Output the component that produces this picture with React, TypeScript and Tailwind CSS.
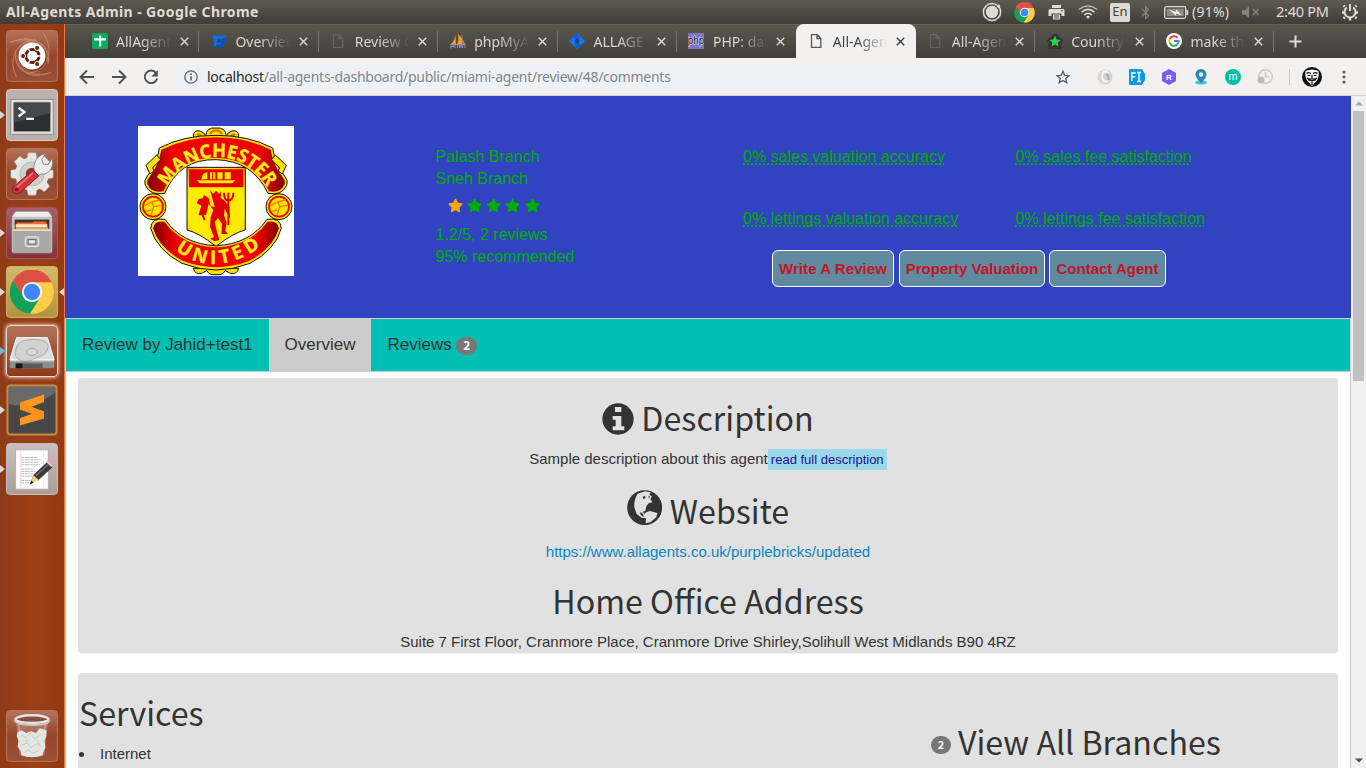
import React from "react";
import { FaStar, FaBluetoothB } from "react-icons/fa";

const UBUNTU = "font-['Noto_Sans',sans-serif]";
const HEAD = "font-['Noto_Sans_CJK_SC',sans-serif] text-[32.2px] leading-[40px] text-[#333] font-normal";

function ChromeMark({ className }: { className: string }) {
  return (
    <svg className={className} viewBox="0 0 48 48">
      <path d="M24 24 L4.1 11.5 A23 23 0 0 1 44.8 13.5 L24 13.5Z" fill="#dd5144" />
      <path d="M24 24 L33 29 L22 47 A23 23 0 0 1 4.1 11.5 L15 29Z" fill="#12a05c" />
      <path d="M24 13.5 H44.8 A23 23 0 0 1 22 47 L33.4 29.2Z" fill="#ffcd46" />
      <path d="M4.1 11.5 A23 23 0 0 1 44.8 13.5 H24 L14.5 29Z" fill="#dd5144" />
      <circle cx="24" cy="24" r="10.8" fill="#f4f4f4" />
      <circle cx="24" cy="24" r="8.7" fill="#4285f4" />
    </svg>
  );
}

function TopBar() {
  return (
    <header className={`flex h-6 shrink-0 items-center bg-linear-to-b from-[#5d5a50] to-[#3f3d38] pl-[6px] text-[#e0dcd3] ${UBUNTU}`}>
      <div className="grow pb-[2px] text-[14px] font-bold tracking-[0.4px]">All-Agents Admin - Google Chrome</div>
      <svg className="h-5 w-5" viewBox="0 0 20 20">
        <circle cx="10" cy="10" r="8.6" fill="none" stroke="#e0dcd3" strokeWidth="1.5" />
        <circle cx="10" cy="10" r="6.2" fill="#e0dcd3" />
        <circle cx="16.6" cy="4.2" r="1.6" fill="#e0dcd3" />
      </svg>
      <ChromeMark className="ml-[12px] h-[21px] w-[21px]" />
      <svg className="ml-[13px] h-[17px] w-[17px]" viewBox="0 0 17 17">
        <path d="M4 1h9v3H4zM1.5 5h14l1 1v6h-3V9.500h-10V12h-3V6z" fill="#e0dcd3" />
        <path d="M5 10.500h7v5H5z" fill="#e0dcd3" />
        <path d="M6 12h5M6 14h5M13 6.800h2" stroke="#4b4942" />
      </svg>
      <svg className="ml-[13px] h-4 w-5" viewBox="0 0 20 16" fill="none" stroke="#e0dcd3" strokeWidth="1.500">
        <path d="M.8 5.500Q10-1.500 19.200 5.500" opacity=".75" />
        <path d="M3.500 8.300Q10 2.500 16.500 8.300" />
        <path d="M6.200 11Q10 7.500 13.800 11" />
        <path d="M8 12.500Q10 11 12 12.500L10 15z" fill="#e0dcd3" stroke="none" />
      </svg>
      <div className="ml-3 flex h-[19px] w-[20px] items-center justify-center rounded-[2px] bg-[#dfdbd2] text-[13px] text-[#46443e]">En</div>
      <FaBluetoothB className="ml-[9px] h-[15px] w-[13px] text-[#85827a]" />
      <svg className="ml-[12px] h-[13px] w-[25px]" viewBox="0 0 25 13">
        <rect x=".7" y=".7" width="21" height="11.600" rx="1.500" fill="none" stroke="#e0dcd3" strokeWidth="1.300" />
        <rect x="2.700" y="2.700" width="17" height="7.600" fill="#8d8a81" />
        <path d="M5 3.500l7 2.500V3.200L18 9.500 12 7.500v2.300z" fill="#f3efe6" />
        <path d="M22.500 4h1.700v5h-1.700z" fill="#e0dcd3" />
      </svg>
      <div className="ml-[3px] w-[38px] pb-[1px] text-[14px] tracking-[0.25px]">(91%)</div>
      <svg className="ml-[11px] h-[14px] w-[19px]" viewBox="0 0 19 14">
        <path d="M1 5h3l4-4v12L4 9.500H1z" fill="#85827a" />
        <path d="M12 4l5.500 6M17.500 4L12 10" stroke="#85827a" strokeWidth="1.500" />
      </svg>
      <div className="ml-[16px] w-[54px] pb-[1px] whitespace-nowrap text-[14.500px] tracking-[-0.25px]">2:40 PM</div>
      <svg className="mr-[7px] ml-[11px] h-[18px] w-[18px]" viewBox="0 0 18 18" fill="none" stroke="#e0dcd3">
        <path d="M5.800 4.500a5.500 5.500 0 1 0 6.400 0" strokeWidth="2" />
        <path d="M9 1v7" strokeWidth="2" />
        <path d="M3.700 3.700L2.500 2.500M14.300 3.700l1.200-1.200M1 9.500h2M15 9.500h2M3.800 14.200l-1.300 1.300M14.200 14.200l1.300 1.300M9 15v2.500" strokeWidth="2.400" />
      </svg>
    </header>
  );
}

function LaunchUbuntu() {
  return (
    <svg viewBox="0 0 52 52">
      <g fill="none" stroke="#e6b9a6" opacity=".4" strokeWidth="1.200">
        <path d="M3 12C26 2 46 14 43 34" />
        <path d="M38 2C50 22 42 42 22 44" />
        <path d="M46 43C24 52 6 40 9 20" />
        <path d="M10 48C1 30 8 12 30 8" />
      </g>
      <path d="M3 12C26 2 46 14 43 34L36 20Q24 8 3 12zM46 43C24 52 6 40 9 20l5 14q12 14 32 9z" fill="#e6b9a6" opacity=".2" />
      <circle cx="27" cy="27.500" r="14.500" fill="#5a1d0b" opacity=".3" />
      <circle cx="26" cy="26" r="14" fill="#fff" />
      <circle cx="26.500" cy="26" r="6.800" fill="none" stroke="#5e2313" strokeWidth="3.200" />
      <g stroke="#fff" strokeWidth="1.500"><path d="M26.500 26h-9M26.500 26l4.800-8.300M26.500 26l4.800 8.300" transform="rotate(60 26.500 26)" /></g>
      <circle cx="26.500" cy="26" r="5.300" fill="#fff" />
      <g fill="#5e2313" stroke="#fff"><circle cx="16.800" cy="26" r="2.600" /><circle cx="31.300" cy="17.600" r="2.600" /><circle cx="31.300" cy="34.400" r="2.600" /></g>
    </svg>
  );
}

function LaunchTerminal() {
  return (
    <svg viewBox="0 0 52 52">
      <rect x="4" y="10" width="44" height="36" fill="#ececec" stroke="#888" />
      <rect x="6" y="12" width="40" height="32" fill="#c9c9c9" />
      <rect x="7" y="13" width="38" height="30" fill="#2d2f30" />
      <path d="M7 13h38v11L7 34z" fill="#515354" opacity=".7" />
      <path d="M12 18.500l6 4.500-6 4.500" fill="none" stroke="#eee" strokeWidth="2.600" />
      <path d="M20 30h8" stroke="#eee" strokeWidth="2.400" />
    </svg>
  );
}

function LaunchSettings() {
  return (
    <svg viewBox="0 0 52 52">
      <g transform="translate(26 26)">
        <g fill="#e9e9e7" stroke="#a7a7a3" strokeWidth=".6">
          {[0, 45, 90, 135].map((a) => (
            <path key={a} transform={`rotate(${a})`} d="M-5-17l1-5h8l1 5v34l-1 5h-8l-1-5z" />
          ))}
        </g>
        <circle r="17.500" fill="#e4e4e2" />
        <circle r="12.500" fill="#cfcfcc" stroke="#b5b5b1" />
        <circle r="6.500" fill="#87401f" />
      </g>
      <path d="M31 26q-5-5-2-12 3-8 11-9l-4 6 2 5 5 0 4-6q2 9-4 14-4 3-8 2l-3 3z" fill="#ececec" stroke="#777" strokeWidth=".8" />
      <path d="M27 22l6 6L14 45c-5 4-11-1-7-6z" fill="#d6333a" stroke="#8c1c22" />
      <path d="M27 25L10 40" stroke="#f08080" strokeWidth="1.500" />
      <circle cx="10" cy="42" r="2" fill="#8c1c22" />
    </svg>
  );
}

function LaunchFiles() {
  return (
    <svg viewBox="0 0 52 52">
      <path d="M9 4h34l4 7v35H5V11z" fill="#c4c4c4" />
      <path d="M9 4h34l4 5H5z" fill="#efefef" />
      <rect x="8" y="12" width="36" height="15" fill="#3b3634" />
      <path d="M10 15h16l2-1h13v12H10z" fill="#f26d2c" />
      <path d="M9 17h33v3H9z" fill="#fce7cf" />
      <path d="M9 20h34v5H9z" fill="#f0a34c" />
      <path d="M6 22h40v25H6z" fill="#a9a9a9" />
      <path d="M6 22h40v2H6z" fill="#dcdcdc" />
      <rect x="19" y="30" width="14" height="10" rx="2" fill="#bdbdbd" stroke="#eee" />
      <rect x="22" y="33" width="8" height="4.500" fill="#eee" stroke="#555" />
    </svg>
  );
}

function LaunchDisk() {
  return (
    <svg viewBox="0 0 52 52">
      <path d="M10 12h32l7 22v8H3v-8z" fill="#cfcfcf" />
      <path d="M10 12h32l7 23H3z" fill="#dededc" stroke="#f4f4f4" />
      <path d="M9 32C8 18 14 14 27 14s18 4 15 11-12 7-16 10-14 2-17-3z" fill="#d2d2d0" stroke="#aaa" />
      <ellipse cx="26" cy="27" rx="5.500" ry="3.500" fill="#ddd" stroke="#999" />
      <path d="M3 37h46v7H3z" fill="#8c8c8a" />
      <path d="M9 39h28v5H9z" fill="#5a5a5a" />
      <path d="M9 39h7v5H9z" fill="#171717" />
    </svg>
  );
}

function LaunchSublime() {
  return (
    <svg viewBox="0 0 52 52">
      <rect x="1.500" y="1.500" width="49" height="49" rx="3" fill="#474747" stroke="#c9873f" strokeWidth="2" />
      <path d="M2.500 2.500h47v6Q26 26 2.500 20z" fill="#8b8b8b" opacity=".5" />
      <path d="M14 18.500L38 10.500V18l-13 5 13 4.500V34.500L14 41.500V34l13-4.500-13-4.500z" fill="#ff9820" />
      <path d="M14 18.500L38 27.500V34.500L14 25.500z" fill="#f99018" />
    </svg>
  );
}

function LaunchEditor() {
  return (
    <svg viewBox="0 0 52 52">
      <path d="M9 6h34v41H9z" fill="#fff" stroke="#b4aba9" />
      <path d="M14.500 6v41" stroke="#f2b9b9" strokeWidth=".7" />
      <path d="M38 6v41" stroke="#f2d5d5" strokeWidth=".6" />
      <g stroke="#b3b3b3" strokeWidth=".9" strokeDasharray="3 .6 5 .6">
        <path d="M15 14h17M15 16.500h20M15 19h18M15 21.500h19M15 26h13M15 28.500h15M15 31h12M15 33.500h11M15 38h10M15 40.500h8" />
      </g>
      <path d="M25 40l3-8 14-13 5 5-14 13z" fill="#3b3b3b" stroke="#1c1c1c" strokeWidth=".6" />
      <path d="M30 33L43 21" stroke="#777" strokeWidth="1.200" />
      <path d="M23.500 42l4-9.500 5.500 5z" fill="#f0d57a" />
      <path d="M23.500 42l2-4 2.300 2.200z" fill="#222" />
      <path d="M41 19l2-2 5 5-2 2z" fill="#cfcfd4" />
      <path d="M43 17c2-2 6 1 5 4l-1 1-4.500-4.500z" fill="#e99ac1" />
    </svg>
  );
}

function LaunchTrash() {
  return (
    <svg viewBox="0 0 52 52">
      <path d="M9 10l4 36q13 4 26 0l4-36z" fill="#d9c2b8" opacity=".28" />
      <path d="M11 22l4-2 5 3 5-2 5 2 4-5 7 2 0 6-2 5 1 7-2 4-1 4q-11 4-22 0l-1-5-3-4 1-6-2-5z" fill="#e3e6e3" />
      <path d="M15 25l5 3 4-5 5 6 6-5M15 36l6-3 4 5 6-4 5 3M18 44l4-4 5 4 6-3M21 29l-1 4M31 30l3 5" fill="none" stroke="#c0c5c1" strokeWidth=".9" />
      <path d="M12 12l3.500 34M40 12l-3.500 34" stroke="#efe6e1" opacity=".6" />
      <ellipse cx="26" cy="8.500" rx="17" ry="4" fill="#87523b" stroke="#e4e4e2" strokeWidth="2.600" />
      <path d="M8 9q0 5 18 5.500T44 9" fill="none" stroke="#c9c9c6" strokeWidth="2" />
    </svg>
  );
}

type Launch = { icon: React.ReactNode; tile: string; left?: string; right?: boolean };

const plain = "bg-linear-to-b from-[#b2735a] via-[#96452a] to-[#9a5136] border border-[#b77459]";
const launches: Launch[] = [
  { icon: <LaunchUbuntu />, tile: plain },
  { icon: <LaunchTerminal />, tile: "bg-linear-to-b from-[#bdb2ad] to-[#b9b0ac] border border-[#d5cdc9]", left: "#ddd6d2" },
  { icon: <LaunchSettings />, tile: plain },
  { icon: <LaunchFiles />, tile: "bg-linear-to-b from-[#a5616b] to-[#84303a] border border-[#a2535c]", left: "#ddd6d2" },
  { icon: <ChromeMark className="h-full w-full p-[2.500px]" />, tile: "bg-linear-to-b from-[#d3b968] to-[#b29340] border border-[#cbb069]", left: "#ddd6d2", right: true },
  { icon: <LaunchDisk />, tile: "bg-linear-to-b from-[#b2735a] to-[#8d3718] border border-[#e8dcd6] shadow-[0_0_4px_#fff]", left: "#69b7e4" },
  { icon: <LaunchSublime />, tile: "bg-[#7a5125]", left: "#ddd6d2" },
  { icon: <LaunchEditor />, tile: "bg-linear-to-b from-[#c9bfbc] to-[#aa9e9b] border border-[#c8bfbc]", left: "#ddd6d2" },
];

function LaunchRow({ item }: { item: Launch }) {
  return (
    <div className="flex h-[52px] items-center">
      <svg className="h-2 w-[6px] shrink-0" viewBox="0 0 6 8">
        {item.left && <path d="M0 0L5 4 0 8z" fill={item.left} />}
      </svg>
      <div className={`h-[52px] w-[52px] shrink-0 overflow-hidden rounded-[4px] [&>svg]:h-full [&>svg]:w-full ${item.tile}`}>{item.icon}</div>
      <svg className="h-2 w-[6px] shrink-0" viewBox="0 0 6 8">
        {item.right && <path d="M6 0L1 4 6 8z" fill="#ddd6d2" />}
      </svg>
    </div>
  );
}

function Launcher() {
  return (
    <aside className="flex w-[65px] shrink-0 flex-col border-r border-[#f2763f] bg-[#983c15] bg-linear-to-r from-[#8f3b18] via-[#9b3f15] to-[#933a14] pt-[6px] pb-[6px]">
      <div className="flex grow flex-col gap-[7px]">
        {launches.map((l, i) => (
          <LaunchRow key={i} item={l} />
        ))}
      </div>
      <LaunchRow item={{ icon: <LaunchTrash />, tile: plain }} />
    </aside>
  );
}

const page = (stroke: string) => (
  <svg viewBox="0 0 16 16" fill="none" stroke={stroke} strokeWidth="1.300">
    <path d="M3.500 1.700h5.800l3.500 3.500v9.100H3.500zM9 1.700v3.800h3.800" />
  </svg>
);

const tabs = [
  { title: "AllAgents", icon: <svg viewBox="0 0 16 16"><rect width="16" height="16" rx="1.500" fill="#0fa861" /><path d="M2 5.200h12v2.200H2zM7 2.500h2.200v11H7z" fill="#fff" /></svg> },
  { title: "Overview", icon: <svg viewBox="0 0 16 16"><path d="M1.500 2.500h13l-2 11.500H3.700z" fill="#0f6cf5" /><path d="M14.300 4L12.500 14H4l2-3h4l.7-4.500z" fill="#0052cc" /><path d="M5.800 6.200h4.400l-.7 3.600h-3z" fill="#43433e" /></svg> },
  { title: "Review C", icon: page("#65635d") },
  { title: "phpMyAd", icon: <svg viewBox="0 0 16 16"><path d="M5.500 2Q5 7 1 11h5zM8 1q1 6-1 10h8Q12 4 8 1z" fill="#f89c1c" /><path d="M12 2l1 9" stroke="#6c78af" /><path d="M.5 11.500h15M1 13.500h2.500v-2H1v4M5 11v4M7.500 11v4M9.500 15v-3h3v3M11 12v3M15 12v3" fill="none" stroke="#9290b8" /></svg> },
  { title: "ALLAGE", icon: <svg viewBox="0 0 16 16"><path d="M8 0l8 8-8 8-8-8z" fill="#1476fb" /><path d="M8 0l3 5-3 3-4-4zM8 16l-3-5 3-3 4 4z" fill="#0860dc" /><path d="M8 5.300L10.700 8 8 10.700 5.300 8z" fill="#34404c" /></svg> },
  { title: "PHP: date", icon: <svg viewBox="0 0 16 16"><rect width="16" height="16" fill="#8273bd" /><text x="8" y="11" textAnchor="middle" fontFamily="Liberation Sans" fontSize="10" fill="#111" stroke="#e8e4ff" strokeWidth="1" paintOrder="stroke">php</text></svg> },
  { title: "All-Agents", active: true, icon: page("#55585d") },
  { title: "All-Agents", icon: page("#65635d") },
  { title: "Country", icon: <svg viewBox="0 0 16 16"><path d="M0 7l8-7 8 7v1.500h-1.500V16h-13V8.500H0z" fill="#343331" /><path d="M8 2.700l1.700 3.800 4 .4-3 2.700.9 4L8 11.500l-3.600 2.100.9-4-3-2.700 4-.4z" fill="#2bd14b" /></svg> },
  { title: "make this", icon: <svg viewBox="0 0 16 16"><circle cx="8" cy="8" r="8" fill="#fff" /><g fill="none" strokeWidth="2"><path d="M11.500 4.700A4.700 4.700 0 0 0 3.800 6" stroke="#ea4335" /><path d="M3.800 6a4.700 4.700 0 0 0 0 4.100" stroke="#fbbc05" /><path d="M3.800 10.100a4.700 4.700 0 0 0 7.400 1.400" stroke="#34a853" /><path d="M11.200 11.500A4.700 4.700 0 0 0 12.700 8H8" stroke="#4285f4" /></g></svg> },
];

function TabStrip() {
  return (
    <div className={`flex h-[34px] shrink-0 border-t border-[#68654f] bg-linear-to-b from-[#59574e] to-[#403f39] pl-[15px] text-[14px] text-[#d9d6ce] ${UBUNTU}`}>
      {tabs.map((t, i) => (
        <div
          key={i}
          className={
            t.active
              ? "-mt-px flex w-[119.400px] shrink-0 items-center rounded-t-[8px] bg-[#f2f1f0] pl-[12px] text-[#3f4245]"
              : "flex w-[119.400px] shrink-0 items-center pb-px pl-[11.500px]"
          }
        >
          <div className="h-4 w-4 shrink-0 [&>svg]:h-4 [&>svg]:w-4">{t.icon}</div>
          <div className="ml-[8px] w-[56px] shrink-0 overflow-hidden pl-[0.500px] whitespace-nowrap mask-r-from-45%">{t.title}</div>
          <svg className="ml-[8px] h-[9px] w-[9px] shrink-0" viewBox="0 0 9 9" stroke="currentColor" strokeWidth="1.500">
            <path d="M.8.8l7.400 7.400M8.200.8L.8 8.200" />
          </svg>
          {!t.active && i !== 5 && <div className="ml-auto h-[21px] w-px bg-[#77756c]" />}
        </div>
      ))}
      <svg className="mt-[10px] ml-[15px] h-[13px] w-[13px]" viewBox="0 0 13 13" stroke="#e2dfd8" strokeWidth="2">
        <path d="M6.500.5v12M.5 6.500h12" />
      </svg>
    </div>
  );
}

function Toolbar() {
  return (
    <div className={`flex h-[38px] shrink-0 items-center border-b border-[#d3d3d3] bg-[#f2f1f0] ${UBUNTU}`}>
      <svg className="ml-[14px] h-4 w-4" viewBox="0 0 16 16" fill="none" stroke="#4d5053" strokeWidth="1.900"><path d="M15 8H2M8 1.500L1.500 8 8 14.500" /></svg>
      <svg className="ml-4 h-4 w-4" viewBox="0 0 16 16" fill="none" stroke="#4d5053" strokeWidth="1.900"><path d="M1 8h13M8 1.500L14.500 8 8 14.500" /></svg>
      <svg className="ml-4 h-4 w-4" viewBox="0 0 16 16" fill="none" stroke="#4d5053" strokeWidth="1.900"><path d="M13 3.800A6.300 6.300 0 1 0 14.200 9.500" /><path d="M14.800 1v6.500H8.300z" fill="#4d5053" stroke="none" /></svg>
      <div className="ml-[14px] flex h-7 w-[910px] items-center rounded-full bg-[#eef2f4] pl-[11px]">
        <svg className="h-[14px] w-[14px]" viewBox="0 0 14 14" fill="none" stroke="#5f6368"><circle cx="7" cy="7" r="6.200" strokeWidth="1.300" /><path d="M7 6.200v4.300M7 3.300v1.600" strokeWidth="1.600" /></svg>
        <div className="ml-[9px] text-[14px] tracking-[-0.27px] text-[#80868b]"><span className="text-[#26282b]">localhost</span>/all-agents-dashboard/public/miami-agent/review/48/comments</div>
        <svg className="mr-[13px] ml-auto h-[14px] w-[14px]" viewBox="0 0 14 14" fill="none" stroke="#54585c" strokeWidth="1.300"><path d="M7 1.300l1.700 4 4.300.4-3.300 2.800 1 4.200L7 10.500l-3.700 2.200 1-4.200L1 5.700l4.300-.4z" /></svg>
      </div>
      <div className="ml-[14px] flex items-center gap-4 [&>svg]:h-4 [&>svg]:w-4">
        <svg viewBox="0 0 16 16"><circle cx="8" cy="8" r="7.500" fill="#d5d5d5" /><path d="M6 2q-4 5 0 11 4 2 7-2-5 2-7-2-1-4 2-5t4 3q1-5-3-6z" fill="#f6f6f6" /><path d="M9 5q4 2 2 6" stroke="#aaa" strokeWidth="2" fill="none" /></svg>
        <svg viewBox="0 0 16 16"><path d="M1 0h12l3 5v6l-3 5H1q-1 0-1-1V1q0-1 1-1z" fill="#0b9bea" /><path d="M2.800 12V4h4M2.800 7.800h3.500M8 3.500h4M10 3.500v9M8 12.500h4" stroke="#fff" strokeWidth="1.400" fill="none" /></svg>
        <svg viewBox="0 0 16 16"><path d="M8 0l7 4v8l-7 4-7-4V4z" fill="#7a5cf0" /><text x="8" y="11" textAnchor="middle" fontFamily="Liberation Sans" fontSize="8" fontWeight="bold" fill="#fff">R</text></svg>
        <svg viewBox="0 0 16 16"><ellipse cx="8" cy="13.500" rx="6" ry="2" fill="#40c5cf" /><path d="M8 14Q2.500 9 2.500 5.500a5.500 5.500 0 0 1 11 0Q13.500 9 8 14z" fill="#2787b8" /><circle cx="8" cy="5.500" r="2.300" fill="#f2f1f0" /></svg>
        <svg viewBox="0 0 16 16"><circle cx="8" cy="8" r="8" fill="#00bfa5" /><text x="8" y="11.200" textAnchor="middle" fontFamily="Lato" fontSize="11" fill="#fff">m</text></svg>
        <svg viewBox="0 0 16 16"><circle cx="8.500" cy="7.500" r="6.800" fill="none" stroke="#c9c9c9" strokeWidth="1.400" /><path d="M8.500 3v5h4" fill="none" stroke="#c9c9c9" strokeWidth="1.400" /><circle cx="4" cy="11" r="3.500" fill="#bcbcbc" /></svg>
      </div>
      <div className="ml-4 h-4 w-px bg-[#c9c9c9]" />
      <svg className="ml-3 h-5 w-5" viewBox="0 0 20 20">
        <circle cx="10" cy="10" r="10" fill="#101010" />
        <path d="M3.500 4Q10 1 16.500 4q1 6-2 10L10 19l-4.500-5q-3-4-2-10z" fill="#f5f5f5" />
        <path d="M4.500 6.500Q7 4.500 9 7M11 7q2-2.500 4.500-.5M5.500 8.500h3M11.500 8.500h3M10 8v3M5 11q3 2 5 .5 2 1.500 5-.5M6 12.500q4 2.500 8 0M10 14.500v3.500" stroke="#111" fill="none" strokeWidth="1.100" />
      </svg>
      <svg className="ml-[20px] h-4 w-1" viewBox="0 0 4 16" fill="#5b5e61"><circle cx="2" cy="3" r="1.600" /><circle cx="2" cy="8" r="1.600" /><circle cx="2" cy="13" r="1.600" /></svg>
    </div>
  );
}

function Crest() {
  return (
    <svg className="mt-[30px] h-[150px] w-[156px] shrink-0 bg-white" viewBox="24 18 468 450">
      <defs>
        <path id="top-arc" d="M112 200A170 170 0 0 1 412 202" />
        <path id="bottom-arc" d="M136 390Q250 478 390 382" />
        <linearGradient id="band">
          <stop offset="0" stopColor="#7d0000" /><stop offset=".18" stopColor="#f00000" /><stop offset=".82" stopColor="#f00000" /><stop offset="1" stopColor="#7d0000" />
        </linearGradient>
        <radialGradient id="shield" r=".75"><stop offset=".65" stopColor="#ffea00" /><stop offset="1" stopColor="#f47b00" /></radialGradient>
      </defs>
      <g fill="#ffe100" stroke="#111" strokeWidth="3">
        <path d="M190 50q0-22 20-17 15 5 17 15 2-27 31-24 29-3 31 24 2-10 17-15 20-5 20 17l-20 14H210z" />
        <path d="M190 445q5 20 25 15l15-8q8 14 28 12 20 2 28-12l15 8q20 5 25-15z" />
      </g>
      <path d="M200 45q10-5 18 8M298 53q8-13 18-8M240 42q18-22 36 0" fill="none" stroke="#d66c00" strokeWidth="6" />
      <path d="M88 84Q160 46 258 46t170 38q6 46 36 84 12 14 6 28-14 32-56 24Q368 122 258 119T104 220Q60 228 46 196q-6-14 6-28 30-38 36-84z" fill="#ffe100" stroke="#111" strokeWidth="3" />
      <path d="M94 89Q170 52 258 52t164 37q8 46 36 83 10 12 5 22-12 26-46 20Q370 116 258 113T100 214Q64 220 53 194q-5-10 5-22 28-37 36-83z" fill="url(#band)" />
      <g fill="#ffe100" stroke="#111" strokeWidth="3">
        <path d="M80 105L48 136l12 26 12-9-4-10 24-24zM436 105l33 31-12 26-12-9 4-10-25-24z" />
      </g>
      <path d="M62 325q2-34 43-27 52 75 153 79 101-4 153-79 41-7 43 27-18 65-94 105-102 40-204 0Q80 390 62 325z" fill="#ffe100" stroke="#111" strokeWidth="3" />
      <path d="M69 325q4-25 34-20 55 74 155 77 100-3 155-77 30-5 34 20-18 60-90 98-99 37-198 0Q87 385 69 325z" fill="url(#band)" />
      <path d="M171 142h175v188q-35 8-88 49-52-41-87-49z" fill="url(#shield)" stroke="#111" strokeWidth="3" />
      <path d="M177 148h163v54H177z" fill="#e50000" />
      <path d="M200 181h116l-10 9h-96zM214 179q2-22 18-22v20zM240 157h16v21h-16zM262 157h16v21h-16zM284 157h18v21h-18z" fill="#ffea00" />
      <path d="M248 157v24M280 157v24" stroke="#e50000" strokeWidth="3" />
      <path d="M178 205h161" stroke="#ffea00" strokeWidth="3" />
      <path d="M240 210l10 12 8-10 10 10 6-8-2 20 12 8 14 18 2 36-10-18-6-12-2 20 8 22-4 24 8 10h-20l2-30-12-18-10 12 6 26 8 28-14 4-14-8 12-5-12-30 2-30 8-20-14-20-8 34-22-2 8-26-14-8 6-12 12-2 4-10 14 10 6 24 12 2z" fill="#df0000" />
      <path d="M295 218v98M282 218q0 22 13 24 15-2 15-24M216 280l8 20M218 270l-10 16" fill="none" stroke="#df0000" strokeWidth="6" />
      {[69, 447].map((x) => (
        <g key={x} fill="none">
          <circle cx={x} cy="260" r="39" fill="#ffe100" stroke="#111" strokeWidth="3" />
          <circle cx={x} cy="260" r="30" stroke="#f00000" strokeWidth="5" />
          <path d={`M${x - 26} 258l22-12 24-6M${x - 4} 246l6 14-8 26M${x + 2} 260l24-4M${x - 20} 274l14-4`} stroke="#f47b00" strokeWidth="4" />
        </g>
      ))}
      <g fontFamily="Open Sans" fontWeight="bold" fill="#ffec1f" stroke="#ffec1f" strokeWidth="1">
        <text fontSize="56"><textPath href="#top-arc" textLength="366" lengthAdjust="spacingAndGlyphs">MANCHESTER</textPath></text>
        <text fontSize="56"><textPath href="#bottom-arc" textLength="276" lengthAdjust="spacing">UNITED</textPath></text>
      </g>
    </svg>
  );
}

const heroBtn = "h-[37px] rounded-[6px] border border-white bg-[#5f8a9f] text-[15px] font-bold text-[#c41425]";

function Stat({ children }: { children: string }) {
  return (
    <div>
      <abbr className="underline decoration-dotted decoration-2 underline-offset-1 [text-decoration-skip-ink:none]">{children}</abbr>
    </div>
  );
}

function Hero() {
  return (
    <section className="flex h-[222px] shrink-0 bg-[#3143c0] pl-[73px] text-[16px] leading-[22px] text-[#00b000]">
      <Crest />
      <div className="ml-[141.500px] w-[307.500px] shrink-0 pt-[50px]">
        <div>Palash Branch</div>
        <div>Sneh Branch</div>
        <div className="flex h-[34px] items-center gap-[4.300px] pb-[3px] pl-[12px]">
          {[0, 1, 2, 3, 4].map((n) => (
            <FaStar key={n} className={n === 0 ? "h-[15px] w-[15px] text-[#ffa500]" : "h-[15px] w-[15px] text-[#00b000]"} />
          ))}
        </div>
        <div>1.2/5, 2 reviews</div>
        <div>95% recommended</div>
      </div>
      <div className="pt-[50px]">
        <div className="grid grid-cols-[272.500px_200px] gap-y-[40px] whitespace-nowrap">
          <Stat>0% sales valuation accuracy</Stat>
          <Stat>0% sales fee satisfaction</Stat>
          <Stat>0% lettings valuation accuracy</Stat>
          <Stat>0% lettings fee satisfaction</Stat>
        </div>
        <div className="mt-[20px] flex pl-[29px]">
          <button className={`w-[122px] tracking-[0.08px] ${heroBtn}`}>Write A Review</button>
          <button className={`ml-[5px] w-[146px] ${heroBtn}`}>Property Valuation</button>
          <button className={`ml-1 w-[117px] ${heroBtn}`}>Contact Agent</button>
        </div>
      </div>
    </section>
  );
}

function Badge({ className }: { className: string }) {
  return (
    <span className={`flex h-[18px] items-center justify-center rounded-[10px] bg-[#777] pb-[2px] font-['Noto_Sans_CJK_SC',sans-serif] leading-[16px] font-bold text-white ${className}`}>2</span>
  );
}

function NavBar() {
  return (
    <nav className="flex h-[54px] shrink-0 border-y border-[#ccc] bg-[#00bfb3] text-[17px] text-[#333]">
      <div className="flex w-[203px] items-center pl-4">Review by Jahid+test1</div>
      <div className="flex w-[102px] items-center justify-center bg-[#ccc]">Overview</div>
      <div className="flex items-center pl-[16.500px]">
        Reviews
        <Badge className="mt-[2px] ml-[4.500px] w-[21px] text-[12px]" />
      </div>
    </nav>
  );
}

function Overview() {
  return (
    <section className="flex h-[275px] shrink-0 flex-col items-center rounded-[4px] bg-[#e1e1e1] shadow-[0_1px_1px_rgba(0,0,0,0.06)]">
      <div className="mt-[19px] flex h-[40px] items-center">
        <svg className="mt-[3px] h-8 w-8" viewBox="306 36 96 96">
          <circle cx="354" cy="84" r="47" fill="#333" />
          <path d="M345 48h19v15h-19zM338 75h26v31h9v12h-35v-12h9V86h-9z" fill="#e1e1e1" />
        </svg>
        <h2 className={`ml-[7px] ${HEAD}`}>Description</h2>
      </div>
      <div className="mt-[12px] flex h-[21px] items-center text-[15px]">
        Sample description about this agent
        <span className="h-[21px] w-[119px] bg-[#9cd8ea] text-center text-[13px] leading-[21px] text-[#1d1190]">read full description</span>
      </div>
      <div className="mt-[20px] flex h-[40px] items-center">
        <svg className="mt-[-6px] h-[35px] w-[35px]" viewBox="381 298 105 105">
          <circle cx="434" cy="351" r="52.500" fill="#333" />
          <path d="M413 309l22-7 17 3-4 8 8 4-5 8 6 10-10 2-8 9-3 15-8 2 8 9-2 4-9-10-6-1 4 9 12 7-9 1-16-12-7-20q-2-23 10-41zM438 365l12-4 22 6-3 13-18 15-14 3 1-14-9-8z" fill="#e1e1e1" />
          <path d="M428 318l7-2 2 6-7 3zM444 318l6-2-2 7z" fill="#333" />
        </svg>
        <h2 className={`ml-[8px] ${HEAD}`}>Website</h2>
      </div>
      <div className="mt-[12px] h-[20px] text-[15px] leading-[20px] text-[#0a86c4]">https://www.allagents.co.uk/purplebricks/updated</div>
      <h2 className={`mt-[18px] ${HEAD}`}>Home Office Address</h2>
      <div className="mt-[12px] text-[15px] leading-[20px] whitespace-nowrap">Suite 7 First Floor, Cranmore Place, Cranmore Drive Shirley,Solihull West Midlands B90 4RZ</div>
    </section>
  );
}

function Services() {
  return (
    <section className="mt-[20px] flex h-[120px] shrink-0 items-start rounded-[4px] bg-[#e1e1e1]">
      <div className="w-[853px] pt-[19px] pl-[1px]">
        <h2 className={HEAD}>Services</h2>
        <div className="mt-[12px] flex h-[20px] items-center text-[15px]">
          <span className="mr-[16px] h-[5px] w-[5px] rounded-full bg-[#333]" />
          Internet
        </div>
      </div>
      <div className="mt-[48px] flex h-[40px] items-center">
        <Badge className="mt-[8px] w-[20px] text-[11px]" />
        <h2 className={`ml-[7px] ${HEAD}`}>View All Branches</h2>
      </div>
    </section>
  );
}

function Scrollbar() {
  return (
    <div className="flex w-[15px] shrink-0 flex-col items-center bg-[#f1f1f1]">
      <svg className="mt-[5px] h-[5px] w-2" viewBox="0 0 8 5"><path d="M0 4.500L4 .5l4 4z" fill="#a3a3a3" /></svg>
      <div className="mt-[5px] h-[270px] w-[11px] bg-[#c1c1c1]" />
      <svg className="mt-auto mb-[5px] h-[5px] w-2" viewBox="0 0 8 5"><path d="M0 .5l4 4 4-4z" fill="#505050" /></svg>
    </div>
  );
}

export default function App() {
  return (
    <div className="flex h-[768px] w-[1366px] flex-col overflow-hidden bg-white">
      <TopBar />
      <div className="flex min-h-0 grow">
        <Launcher />
        <main className="flex min-w-0 grow flex-col">
          <TabStrip />
          <Toolbar />
          <div className="flex min-h-0 grow">
            <div className="flex min-w-0 grow flex-col overflow-hidden font-['Liberation_Sans',Arial,sans-serif] text-[#333]">
              <Hero />
              <div className="flex min-h-0 grow flex-col overflow-hidden border-x border-[#ccc]">
                <NavBar />
                <div className="flex flex-col px-[12px] pt-[6px]">
                  <Overview />
                  <Services />
                </div>
              </div>
            </div>
            <Scrollbar />
          </div>
        </main>
      </div>
    </div>
  );
}
